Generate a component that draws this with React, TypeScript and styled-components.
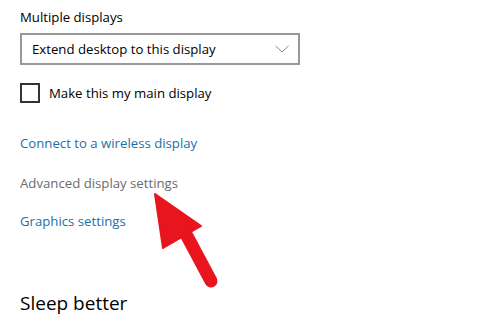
import React from 'react';
import styled, { createGlobalStyle } from 'styled-components';

const GlobalStyle = createGlobalStyle`
  html, body {
    margin: 0;
    padding: 0;
    background: #ffffff;
  }
  body {
    width: 502px;
    height: 320px;
    overflow: hidden;
    font-family: 'Open Sans', 'Noto Sans', sans-serif;
  }
`;

const Page = styled.div`
  position: relative;
  width: 502px;
  height: 320px;
  padding: 0 20px;
  box-sizing: border-box;
  display: flex;
  flex-direction: column;
  align-items: flex-start;
`;

const FieldLabel = styled.div`
  margin-top: 7px;
  font-size: 13.2px;
  line-height: 20px;
  color: #000000;
`;

const Select = styled.div`
  margin-top: 6px;
  width: 280px;
  height: 32px;
  box-sizing: border-box;
  border: 2px solid #999999;
  display: flex;
  align-items: center;
  justify-content: space-between;
  padding: 0 9px 0 10px;
  font-size: 13.2px;
  color: #000000;
`;

const CheckRow = styled.div`
  margin-top: 18px;
  display: flex;
  align-items: center;
  gap: 9px;
  font-size: 13.2px;
  color: #000000;
`;

const Box = styled.span`
  width: 20px;
  height: 20px;
  box-sizing: border-box;
  border: 2px solid #333333;
`;

const Link = styled.div<{ $muted?: boolean; $gap: number }>`
  margin-top: ${({ $gap }) => $gap}px;
  font-size: 13.2px;
  line-height: 20px;
  color: ${({ $muted }) => ($muted ? '#6b6b6b' : '#1b6fa8')};
`;

const Heading = styled.div`
  margin-top: 58px;
  font-size: 19px;
  line-height: 28px;
  color: #000000;
`;

const Pointer = styled.svg`
  position: absolute;
  left: 0;
  top: 0;
  pointer-events: none;
`;

const Chevron = () => (
  <svg width="14" height="8" viewBox="0 0 14 8">
    <path d="M0.5 0.8 L7 7 L13.5 0.8" fill="none" stroke="#8a8a8a" strokeWidth="1" />
  </svg>
);

export default function App() {
  return (
    <>
      <GlobalStyle />
      <Page>
        <FieldLabel>Multiple displays</FieldLabel>
        <Select>
          <span>Extend desktop to this display</span>
          <Chevron />
        </Select>
        <CheckRow>
          <Box />
          <span>Make this my main display</span>
        </CheckRow>
        <Link $gap={30}>Connect to a wireless display</Link>
        <Link $gap={20} $muted>Advanced display settings</Link>
        <Link $gap={18}>Graphics settings</Link>
        <Heading>Sleep better</Heading>
        <Pointer width="502" height="320" viewBox="0 0 502 320">
          <line x1="187" y1="236" x2="211" y2="281" stroke="#e8141e" strokeWidth="13" strokeLinecap="round" />
          <polygon points="155,194 201,226 163,248" fill="#e8141e" stroke="#e8141e" strokeWidth="2" strokeLinejoin="round" />
        </Pointer>
      </Page>
    </>
  );
}
